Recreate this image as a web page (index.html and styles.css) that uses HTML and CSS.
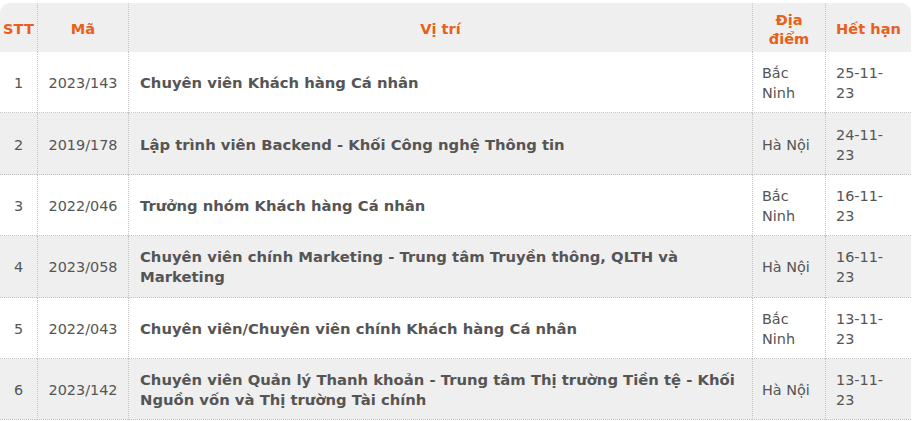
FILE: index.html
```html
<!DOCTYPE html>
<html lang="vi">
<head>
<meta charset="utf-8">
<title>Tuyển dụng</title>
<link rel="stylesheet" href="styles.css">
</head>
<body>
<table class="jobs">
  <colgroup>
    <col class="c-stt"><col class="c-ma"><col class="c-vt"><col class="c-dd"><col class="c-hh">
  </colgroup>
  <thead>
    <tr>
      <th class="first">STT</th>
      <th>Mã</th>
      <th>Vị trí</th>
      <th>Địa điểm</th>
      <th class="last">Hết hạn</th>
    </tr>
  </thead>
  <tbody>
    <tr>
      <td class="num">1</td><td class="code">2023/143</td>
      <td class="title">Chuyên viên Khách hàng Cá nhân</td>
      <td class="loc">Bắc Ninh</td><td class="date">25-11-23</td>
    </tr>
    <tr class="alt">
      <td class="num">2</td><td class="code">2019/178</td>
      <td class="title">Lập trình viên Backend - Khối Công nghệ Thông tin</td>
      <td class="loc">Hà Nội</td><td class="date">24-11-23</td>
    </tr>
    <tr>
      <td class="num">3</td><td class="code">2022/046</td>
      <td class="title">Trưởng nhóm Khách hàng Cá nhân</td>
      <td class="loc">Bắc Ninh</td><td class="date">16-11-23</td>
    </tr>
    <tr class="alt">
      <td class="num">4</td><td class="code">2023/058</td>
      <td class="title">Chuyên viên chính Marketing - Trung tâm Truyền thông, QLTH và Marketing</td>
      <td class="loc">Hà Nội</td><td class="date">16-11-23</td>
    </tr>
    <tr>
      <td class="num">5</td><td class="code">2022/043</td>
      <td class="title">Chuyên viên/Chuyên viên chính Khách hàng Cá nhân</td>
      <td class="loc">Bắc Ninh</td><td class="date">13-11-23</td>
    </tr>
    <tr class="alt">
      <td class="num">6</td><td class="code">2023/142</td>
      <td class="title">Chuyên viên Quản lý Thanh khoản - Trung tâm Thị trường Tiền tệ - Khối Nguồn vốn và Thị trường Tài chính</td>
      <td class="loc">Hà Nội</td><td class="date">13-11-23</td>
    </tr>
  </tbody>
</table>
</body>
</html>
```
FILE: styles.css
```css
html, body {
  margin: 0;
  padding: 0;
  background: #ffffff;
}
body {
  font-family: "DejaVu Sans", Verdana, sans-serif;
  font-size: 14.4px;
  color: #555555;
}
.jobs {
  margin-top: 3px;
  width: 911px;
  table-layout: fixed;
  border-collapse: separate;
  border-spacing: 0;
}
.c-stt { width: 37px; }
.c-ma { width: 91px; }
.c-vt { width: 624px; }
.c-dd { width: 73px; }
.c-hh { width: 86px; }

.jobs th {
  background: #efefef;
  color: #e8601c;
  font-weight: bold;
  font-size: 14.6px;
  line-height: 19px;
  height: 49px;
  padding: 2px 2px 0;
  text-align: center;
  vertical-align: middle;
  border-left: 1px dotted #c4c4c4;
  box-sizing: border-box;
}
.jobs th.first {
  border-left: none;
  border-top-left-radius: 10px;
}
.jobs th.last {
  border-top-right-radius: 10px;
}
.jobs td {
  height: 61.4px;
  box-sizing: border-box;
  padding: 11px 10px 9px;
  line-height: 20px;
  vertical-align: middle;
  border-left: 1px dotted #c4c4c4;
  border-bottom: 1px dotted #c4c4c4;
}
.jobs td.num {
  border-left: none;
  text-align: center;
  padding-left: 2px;
  padding-right: 2px;
}
.jobs td.code {
  text-align: center;
  padding-left: 4px;
  padding-right: 4px;
}
.jobs td.title {
  font-weight: bold;
  font-size: 14.8px;
  padding-left: 11px;
  padding-right: 10px;
}
.jobs td.loc {
  padding-left: 9px;
  padding-right: 8px;
}
.jobs td.date {
  padding-left: 10px;
  padding-right: 14px;
}
.jobs tr.alt td {
  background: #efefef;
}
```
